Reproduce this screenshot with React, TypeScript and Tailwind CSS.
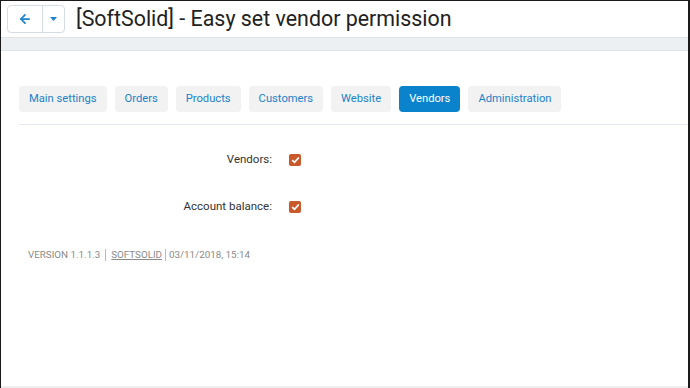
import { ArrowLeft } from "lucide-react";

const tabs = [
  "Main settings",
  "Orders",
  "Products",
  "Customers",
  "Website",
  "Vendors",
  "Administration",
];

function Check() {
  return (
    <span className="flex h-[12px] w-[12px] items-center justify-center rounded-[2px] bg-[#c9582b]">
      <svg width="9" height="8" viewBox="0 0 9 8">
        <path d="M1.2 4.2 L3.5 6.3 L7.8 1.5" stroke="#fff" strokeWidth="1.8" fill="none" />
      </svg>
    </span>
  );
}

export default function App() {
  return (
    <div
      className="flex h-[388px] w-[690px] flex-col border-t border-l border-r-2 border-[#1a1a1a] bg-white"
      style={{ fontFamily: "Roboto, 'Open Sans', sans-serif" }}
    >
      <div className="flex h-[36px] items-center gap-[11px] pl-[6px]">
        <div className="flex h-[28px] overflow-hidden rounded-[4px] border border-[#d6dce3] bg-white">
          <button className="flex w-[35px] items-center justify-center border-r border-[#d6dce3] text-[#1b82cb]">
            <ArrowLeft size={14} strokeWidth={3} />
          </button>
          <button className="flex w-[21px] items-center justify-center">
            <svg width="7" height="4" viewBox="0 0 7 4">
              <path d="M0 0 H7 L3.5 4 Z" fill="#1b82cb" />
            </svg>
          </button>
        </div>
        <h1 className="text-[21.4px] leading-none text-[#222]">
          [SoftSolid] - Easy set vendor permission
        </h1>
      </div>
      <div className="h-[14px] border-t border-b border-[#e0e4e8] bg-[#edf0f3]" />
      <div className="pl-[18px] pt-[35px]">
        <div className="flex gap-[8px] border-b border-[#e4eaf0] pb-[12px]">
          {tabs.map((t) => (
            <span
              key={t}
              className={
                t === "Vendors"
                  ? "flex h-[26px] items-center rounded-[4px] bg-[#0b83cc] px-[10px] pt-px text-[11.2px] text-white"
                  : "flex h-[26px] items-center rounded-[4px] bg-[#f2f2f2] px-[10px] pt-px text-[11.2px] text-[#1a82cb]"
              }
            >
              {t}
            </span>
          ))}
        </div>
      </div>
      <div className="mt-[26px] flex flex-col gap-[30px] text-[11.5px] text-[#333]">
        <div className="flex items-center">
          <span className="w-[271px] text-right">Vendors:</span>
          <span className="ml-[17px]">
            <Check />
          </span>
        </div>
        <div className="flex items-center">
          <span className="w-[271px] text-right">Account balance:</span>
          <span className="ml-[17px]">
            <Check />
          </span>
        </div>
      </div>
      <div className="mt-[32px] flex items-center pl-[27px] text-[9.8px] text-[#8a8a8a]">
        <span>VERSION 1.1.1.3</span>
        <span className="mx-[5px] h-[12px] w-px bg-[#bbb]" />
        <span className="underline">SOFTSOLID</span>
        <span className="mx-[3px] h-[12px] w-px bg-[#bbb]" />
        <span>03/11/2018, 15:14</span>
      </div>
      <div className="flex-1" />
      <div className="h-[2px] bg-[#eeeeee]" />
    </div>
  );
}
